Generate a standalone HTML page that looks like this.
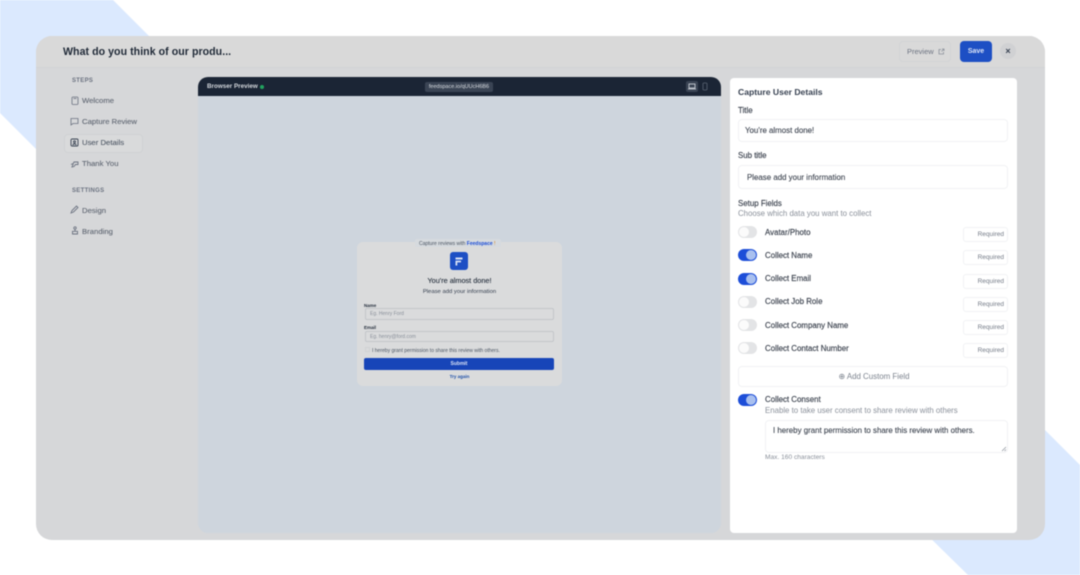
<!DOCTYPE html>
<html><head><meta charset="utf-8"><style>
html,body{margin:0;padding:0;background:#fff}
#p{position:relative;width:1080px;height:575px;overflow:hidden;background:#fff;font-family:"Liberation Sans",sans-serif;color:#374151;filter:blur(.4px)}
#p div,#p span{position:absolute;white-space:nowrap;box-sizing:border-box}
.nav{font-size:7.7px;line-height:10px;color:#5f6672;left:82px;letter-spacing:.02px;-webkit-text-stroke:.1px #5f6672}
.lab{left:765px;font-size:7.9px;line-height:10px;color:#3b424e;-webkit-text-stroke:.15px #3b424e}
.tg{left:738px;width:19px;height:12px;border-radius:6px;background:#e3e4e6}
.tg i{position:absolute;left:1px;top:1px;width:10px;height:10px;border-radius:50%;background:#fbfbfb}
.tg.on{background:#1d4ed8}
.tg.on i{left:8px;background:#a9c0ef}
.rq{left:963px;width:45px;height:15px;border:1px solid #f1f2f4;border-radius:3px;background:#fff;font-size:6.5px;line-height:13px;color:#747b87;text-align:right;padding-right:3px}
.in{left:738px;width:270px;border:1px solid #f1f2f4;border-radius:4px;background:#fff;font-size:7.9px;color:#3b424e;-webkit-text-stroke:.1px #3b424e}
svg{position:absolute;fill:none}
</style></head><body><div id="p">
<svg style="left:0;top:0" width="1080" height="575"><polygon points="0,0 113,0 260,147 147,260 0,113" fill="#dbe9fe"/><polygon points="1080,575 968,575 820,430 1045,430 1080,465" fill="#dbe9fe"/></svg>
<div style="left:36px;top:36px;width:1009px;height:504px;border-radius:16px;background:#d6d7d9"></div>
<div style="left:36px;top:36px;width:1009px;height:32px;border-radius:16px 16px 0 0;background:#d9d9d9;border-bottom:1px solid #d1d3d5"></div>
<div style="left:63px;top:45px;font-size:10.6px;line-height:15px;font-weight:bold;color:#1f2937;letter-spacing:.05px">What do you think of our produ...</div>
<div style="left:899px;top:41px;width:52px;height:21px;border:1px solid #d2d4d6;border-radius:4px;font-size:7.5px;line-height:19px;color:#6b7280;padding-left:7px">Preview</div>
<svg style="left:938px;top:48px" width="7" height="7" stroke="#8a909a" stroke-width=".8"><path d="M3 1.5H1v4.5h4.5V4M4 1h2v2M6 1L3.5 3.5"/></svg>
<div style="left:960px;top:41px;width:32px;height:21px;border-radius:4px;background:#1d4fc4;color:#dbe4f7;font-size:7px;line-height:22px;text-align:center;font-weight:bold">Save</div>
<div style="left:1000px;top:43px;width:16px;height:16px;border-radius:50%;background:#d0d1d3;color:#374151;font-size:9px;line-height:16px;text-align:center;font-weight:bold">×</div>

<div style="left:72px;top:77px;font-size:6px;line-height:9px;color:#6b7280;letter-spacing:.3px;font-weight:bold">STEPS</div>
<svg style="left:71px;top:96px" width="8" height="9" stroke="#6b7280" stroke-width=".8"><rect x="1" y="1" width="6" height="7.5" rx="1"/><path d="M2.5 2.5h3"/></svg>
<div class="nav" style="top:96px">Welcome</div>
<svg style="left:70px;top:117px" width="9" height="9" stroke="#6b7280" stroke-width=".8"><path d="M1 1.5h7v5H3L1 8z"/></svg>
<div class="nav" style="top:117px">Capture Review</div>
<div style="left:64px;top:134px;width:79px;height:19px;border:1px solid #d0d2d4;border-radius:4px;background:#d9dadb"></div>
<svg style="left:70px;top:138px" width="9" height="9" stroke="#374151" stroke-width=".9"><rect x="1" y="1" width="7" height="7" rx="1"/><circle cx="4.5" cy="3.8" r="1"/><path d="M2.8 7c.3-1.5 3.1-1.5 3.4 0"/></svg>
<div class="nav" style="top:138px;color:#4b5563">User Details</div>
<svg style="left:70px;top:159px" width="9" height="9" stroke="#6b7280" stroke-width=".9"><path d="M1 5.5l3-1.5M4 3h4v2.5H5.5L4 7.5 2 8z"/></svg>
<div class="nav" style="top:159px">Thank You</div>
<div style="left:72px;top:187px;font-size:6px;line-height:9px;color:#6b7280;letter-spacing:.3px;font-weight:bold">SETTINGS</div>
<svg style="left:70px;top:205px" width="9" height="9" stroke="#6b7280" stroke-width=".9"><path d="M1 8l1-2.5L6.5 1 8 2.5 3.5 7z"/></svg>
<div class="nav" style="top:206px">Design</div>
<svg style="left:71px;top:226px" width="8" height="9" stroke="#6b7280" stroke-width=".9"><circle cx="4" cy="2" r="1.2"/><path d="M4 3.2v2M1.5 5.3h5V8h-5z"/></svg>
<div class="nav" style="top:227px">Branding</div>

<div style="left:198px;top:77px;width:523px;height:456px;border-radius:10px;background:#ced5dd"></div>
<div style="left:198px;top:77px;width:523px;height:19px;border-radius:10px 10px 0 0;background:#1b2535"></div>
<div style="left:207px;top:82px;font-size:6.3px;line-height:10px;color:#d3d7dc;font-weight:bold">Browser Preview</div>
<div style="left:260px;top:85px;width:4px;height:4px;border-radius:50%;background:#22a35f"></div>
<div style="left:425px;top:82px;width:68px;height:10px;border-radius:2px;background:#3a4454;font-size:5.5px;line-height:10px;color:#d8dce1;text-align:center">feedspace.io/qUUcH6B6</div>
<div style="left:686px;top:81px;width:12px;height:11px;border-radius:2px;background:#3a4454"></div>
<svg style="left:688px;top:83px" width="8" height="7" stroke="#d8dce1" stroke-width=".8"><rect x="1" y="1" width="6" height="4"/><path d="M0 6h8"/></svg>
<svg style="left:702px;top:82px" width="6" height="9" stroke="#5b6573" stroke-width=".8"><rect x="1" y="1" width="4" height="7" rx="1"/></svg>

<div style="left:357px;top:242px;width:205px;height:144px;border-radius:6px;background:#dadbdc"></div>
<div style="left:415px;top:239px;width:86px;height:8px;background:#d6dade;border-radius:2px"></div>
<div style="left:419px;top:241px;font-size:5px;line-height:7px;color:#4b5563">Capture reviews with <span style="position:static;color:#1d4ed8;font-weight:bold">Feedspace</span> <span style="position:static;color:#d97706">!</span></div>
<div style="left:450px;top:252px;width:18px;height:18px;border-radius:3px;background:#1d4fc4"></div>
<svg style="left:454px;top:256px" width="10" height="11"><path d="M1.5 1.5H8.5V3.5H1.5zM1.5 4.6H7V6.4H3.3V9.5H1.5z" fill="#d6e0f5"/></svg>
<div style="left:357px;width:205px;top:276px;font-size:7.3px;line-height:10px;color:#1f2937;text-align:center;-webkit-text-stroke:.1px #1f2937">You're almost done!</div>
<div style="left:357px;width:205px;top:288px;font-size:5.9px;line-height:8px;color:#374151;text-align:center">Please add your information</div>
<div style="left:364px;top:303px;font-size:4.5px;line-height:5px;color:#1f2937;font-weight:bold">Name</div>
<div style="left:365px;top:308px;width:189px;height:12px;border:1px solid #c3c6ca;border-radius:2px;font-size:5px;line-height:11px;color:#8a909a;padding-left:4px">Eg. Henry Ford</div>
<div style="left:364px;top:325px;font-size:4.5px;line-height:5px;color:#1f2937;font-weight:bold">Email</div>
<div style="left:365px;top:331px;width:189px;height:11px;border:1px solid #c3c6ca;border-radius:2px;font-size:5px;line-height:10px;color:#8a909a;padding-left:4px">Eg. henry@ford.com</div>
<div style="left:365px;top:347px;width:5px;height:5px;border:1px solid #d0d2d4"></div>
<div style="left:372px;top:348px;font-size:5px;line-height:7px;color:#4b5563">I hereby grant permission to share this review with others.</div>
<div style="left:364px;top:358px;width:190px;height:12px;border-radius:2px;background:#1745b8;color:#d9e2f5;font-size:5px;line-height:12px;text-align:center;font-weight:bold">Submit</div>
<div style="left:357px;width:205px;top:373px;font-size:4.5px;line-height:7px;color:#1d4fa8;text-align:center;font-weight:bold">Try again</div>

<div style="left:730px;top:78px;width:287px;height:455px;border-radius:4px;background:#fff"></div>
<div style="left:738px;top:86px;font-size:8.6px;line-height:12px;font-weight:bold;color:#374151">Capture User Details</div>
<div class="lab" style="left:738px;top:106px">Title</div>
<div class="in" style="top:119px;height:23px;line-height:22px;padding-left:6px">You're almost done!</div>
<div class="lab" style="left:738px;top:151px">Sub title</div>
<div class="in" style="top:165px;height:24px;line-height:23px;padding-left:8px">Please add your information</div>
<div class="lab" style="left:738px;top:199px">Setup Fields</div>
<div style="left:738px;top:209px;font-size:7.85px;line-height:10px;color:#8a909a">Choose which data you want to collect</div>

<div class="tg" style="top:226px"><i></i></div><div class="lab" style="top:228px">Avatar/Photo</div><div class="rq" style="top:227px">Required</div>
<div class="tg on" style="top:249px"><i></i></div><div class="lab" style="top:251px">Collect Name</div><div class="rq" style="top:250px">Required</div>
<div class="tg on" style="top:273px"><i></i></div><div class="lab" style="top:274px">Collect Email</div><div class="rq" style="top:274px">Required</div>
<div class="tg" style="top:296px"><i></i></div><div class="lab" style="top:297px">Collect Job Role</div><div class="rq" style="top:297px">Required</div>
<div class="tg" style="top:319px"><i></i></div><div class="lab" style="top:321px">Collect Company Name</div><div class="rq" style="top:320px">Required</div>
<div class="tg" style="top:342px"><i></i></div><div class="lab" style="top:344px">Collect Contact Number</div><div class="rq" style="top:343px">Required</div>

<div class="in" style="top:366px;height:21px;line-height:19px;text-align:center;color:#7c838e;-webkit-text-stroke:0;padding-left:2px">⊕ Add Custom Field</div>
<div class="tg on" style="top:394px"><i></i></div><div class="lab" style="top:395px">Collect Consent</div>
<div style="left:765px;top:405px;font-size:7.85px;line-height:11px;color:#8a909a">Enable to take user consent to share review with others</div>
<div class="in" style="left:765px;width:243px;top:420px;height:33px;line-height:20px;padding-left:7px">I hereby grant permission to share this review with others.</div>
<svg style="left:1001px;top:446px" width="6" height="6" stroke="#8a909a" stroke-width=".7"><path d="M1 5L5 1M3.5 5L5 3.5"/></svg>
<div style="left:765px;top:453px;font-size:6.6px;line-height:9px;color:#8a909a">Max. 160 characters</div>
</div></body></html>
